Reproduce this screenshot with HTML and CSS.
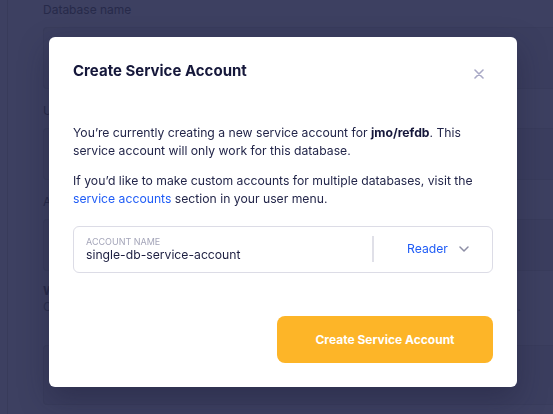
FILE: index.html
```html
<!DOCTYPE html>
<html>
<head>
<meta charset="utf-8">
<link rel="stylesheet" href="styles.css">
</head>
<body>
<div class="page">
  <div class="rail"></div>
  <div class="form">
    <div class="label">Database name</div>
    <div class="box box-a"></div>
    <div class="label clip">U</div>
    <div class="box box-b"></div>
    <div class="label clip">A</div>
    <div class="box box-c"></div>
    <div class="label clip strong">W</div>
    <div class="desc-row">
      <span class="desc clip">C</span>
      <span class="desc tail">s.</span>
    </div>
    <div class="box box-d"></div>
  </div>
</div>

<div class="overlay">
  <div class="modal">
    <div class="header">
      <h2 class="title">Create Service Account</h2>
      <svg class="close" width="10" height="10" viewBox="0 0 10 10"><path d="M1 1L9 9M9 1L1 9" stroke="#a9a9c6" stroke-width="1.6" stroke-linecap="round"/></svg>
    </div>
    <p class="text first">You’re currently creating a new service account for <b>jmo/refdb</b>. This service account will only work for this database.</p>
    <p class="text">If you’d like to make custom accounts for multiple databases, visit the <a class="link">service accounts</a> section in your user menu.</p>
    <div class="field">
      <div class="field-main">
        <div class="field-label">Account name</div>
        <div class="field-value">single-db-service-account</div>
      </div>
      <div class="divider"></div>
      <div class="role">
        <span class="role-name">Reader</span>
        <svg class="chev" width="10" height="6" viewBox="0 0 10 6"><path d="M1 1L5 5L9 1" fill="none" stroke="#8d8ea5" stroke-width="1.5" stroke-linecap="round" stroke-linejoin="round"/></svg>
      </div>
    </div>
    <div class="actions">
      <button class="btn">Create Service Account</button>
    </div>
  </div>
</div>
</body>
</html>
```

FILE: styles.css
```css
html, body {
  margin: 0;
  padding: 0;
}
body {
  width: 553px;
  height: 414px;
  overflow: hidden;
  background: #3d4061;
  font-family: Inter, "Noto Sans", sans-serif;
}
.page {
  display: flex;
  height: 414px;
}
.rail {
  width: 7px;
  border-right: 1px solid #383b5a;
  flex: none;
}
.form {
  flex: 1;
  padding-left: 35px;
  display: flex;
  flex-direction: column;
}
.label {
  font-size: 12px;
  line-height: 16px;
  color: #272a4a;
  margin-top: 2px;
}
.label.strong {
  font-weight: 700;
  margin-top: 0;
}
.desc-row {
  display: flex;
  justify-content: space-between;
  padding-right: 32px;
}
.desc {
  font-size: 12px;
  line-height: 16px;
  color: #2c3050;
}
.box {
  border: 1px solid #393c5c;
  border-right: none;
  background: #3b3e5f;
  border-radius: 4px 0 0 4px;
}
.box-a { margin-top: 9px; height: 60px; margin-bottom: 12px; }
.box-b { margin-top: 9px; height: 50px; margin-bottom: 12px; }
.box-c { margin-top: 9px; height: 50px; margin-bottom: 12px; }
.box-d { margin-top: 30px; height: 58px; }

.overlay {
  position: fixed;
  inset: 0;
  display: flex;
  align-items: flex-start;
  padding: 37px 0 0 49px;
}
.modal {
  width: 468px;
  height: 350px;
  box-sizing: border-box;
  padding: 24px;
  background: #ffffff;
  border-radius: 6px;
  display: flex;
  flex-direction: column;
  box-shadow: 0 12px 30px rgba(22, 24, 48, 0.35);
}
.header {
  display: flex;
  justify-content: space-between;
  align-items: center;
  height: 20px;
}
.title {
  margin: 0;
  font-size: 15px;
  line-height: 20px;
  font-weight: 700;
  color: #15173a;
}
.close {
  margin: 6px 9px 0 0;
}
.text {
  margin: 12px 0 0;
  font-size: 12.2px;
  line-height: 18px;
  color: #23264a;
}
.text.first {
  margin-top: 42.6px;
}
.text b {
  font-weight: 700;
  color: #15173a;
}
.link {
  color: #1f5cf6;
}
.field {
  margin-top: 18.4px;
  height: 47px;
  box-sizing: border-box;
  border: 1px solid #dcdce6;
  border-radius: 6px;
  display: flex;
  align-items: center;
}
.field-main {
  flex: 1;
  padding-left: 12px;
}
.field-label {
  font-size: 9px;
  line-height: 11px;
  text-transform: uppercase;
  color: #a4a5b9;
}
.field-value {
  font-size: 12.2px;
  line-height: 16px;
  color: #1c1e40;
}
.divider {
  width: 2px;
  height: 26px;
  background: #e0e0e8;
}
.role {
  width: 118px;
  box-sizing: border-box;
  padding-left: 33px;
  display: flex;
  align-items: center;
}
.role-name {
  font-size: 12.2px;
  line-height: 16px;
  color: #1f5cf6;
}
.chev {
  margin-left: 11px;
}
.actions {
  margin-top: auto;
  display: flex;
  justify-content: flex-end;
}
.btn {
  width: 216px;
  height: 47px;
  border: none;
  border-radius: 8px;
  background: #fdb528;
  color: #ffffff;
  font-family: Inter, "Noto Sans", sans-serif;
  font-size: 12px;
  font-weight: 700;
  padding: 0;
}
```
